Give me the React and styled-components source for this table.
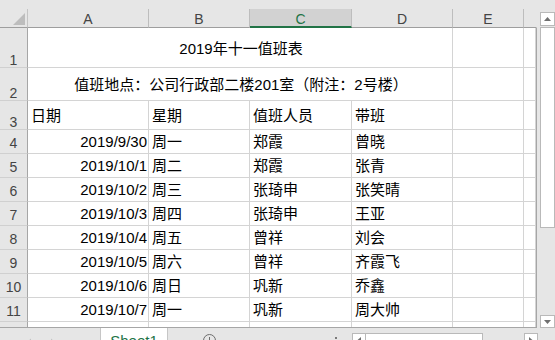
import React from "react";
import styled, { createGlobalStyle } from "styled-components";

const GlobalStyle = createGlobalStyle`
  html, body {
    margin: 0;
    padding: 0;
    background: #e6e6e6;
  }
  * {
    box-sizing: border-box;
  }
`;

// row header, A..E, then the sliver of F that fits before the frame
const BODY_COLS = "28px 121px 101px 102px 101px 71px 12px";
const HEAD_COLS = "28px 121px 101px 102px 101px 71px 13px";

const Window = styled.div`
  width: 555px;
  height: 340px;
  overflow: hidden;
  background: #e6e6e6;
  display: flex;
  flex-direction: column;
  font-family: "Liberation Sans", "Noto Sans CJK SC", sans-serif;
  color: #000;
`;

const Workspace = styled.div`
  display: flex;
  height: 328px;
  flex: none;
`;

const SheetPane = styled.div`
  width: 537px;
  padding-top: 9px;
  display: flex;
  flex-direction: column;
`;

const ColumnHeaders = styled.div`
  display: grid;
  grid-template-columns: ${HEAD_COLS};
  height: 19px;
  flex: none;
`;

const Corner = styled.div`
  position: relative;
  border-right: 1px solid #c4c4c4;
  border-bottom: 1px solid #9e9e9e;
  svg {
    position: absolute;
    right: 2px;
    bottom: 2px;
  }
`;

const ColHead = styled.div`
  display: flex;
  align-items: flex-end;
  justify-content: center;
  font-size: 14px;
  line-height: 14px;
  padding-bottom: ${(p) => (p.$active ? 0 : 1)}px;
  background: ${(p) => (p.$active ? "#d2d2d2" : "#e6e6e6")};
  color: ${(p) => (p.$active ? "#217346" : "#444")};
  border-right: 1px solid ${(p) => (p.$last ? "transparent" : "#bdbdbd")};
  border-bottom: ${(p) => (p.$active ? "2px solid #217346" : "1px solid #9e9e9e")};
`;

const Body = styled.div`
  flex: 1;
  min-height: 0;
  display: grid;
  grid-template-columns: ${BODY_COLS};
  grid-template-rows: 40px 33px 29px repeat(9, 24px);
  align-content: start;
  background: #fff;
  border-right: 1px solid #a6a6a6;
  border-bottom: 1px solid #a6a6a6;
  overflow: hidden;
`;

const RowHead = styled.div`
  display: flex;
  justify-content: center;
  align-items: ${(p) => (p.$low ? "flex-end" : "center")};
  padding-top: ${(p) => (p.$low ? 0 : 3)}px;
  background: #e6e6e6;
  color: #444;
  font-size: 14px;
  line-height: 14px;
  border-right: 1px solid #a6a6a6;
  border-bottom: 1px solid #d0d0d0;
`;

const Cell = styled.div`
  display: flex;
  align-items: center;
  justify-content: ${(p) =>
    p.$align === "right" ? "flex-end" : p.$align === "center" ? "center" : "flex-start"};
  grid-column: ${(p) => (p.$span ? `span ${p.$span}` : "auto")};
  padding: ${(p) => p.$nudge || 0}px 1px 0 3px;
  font-size: 15px;
  line-height: 18px;
  white-space: nowrap;
  overflow: hidden;
  border-right: 1px solid #d4d4d4;
  border-bottom: 1px solid #d4d4d4;
`;

const VScroll = styled.div`
  width: 15px;
  margin-left: 3px;
  padding-top: 12px;
  display: flex;
  flex-direction: column;
`;

const ScrollButton = styled.div`
  flex: none;
  width: ${(p) => p.$w || 15}px;
  height: ${(p) => p.$h || 14}px;
  background: #fff;
  border: 1px solid #b9b9b9;
  display: flex;
  align-items: center;
  justify-content: center;
`;

const VThumb = styled.div`
  flex: none;
  height: 201px;
  margin-top: 1px;
  background: #fff;
  border: 1px solid #b9b9b9;
`;

const Fill = styled.div`
  flex: 1;
`;

const TabBar = styled.div`
  display: flex;
  height: 24px;
  flex: none;
`;

const NavArea = styled.div`
  width: 100px;
  display: flex;
  align-items: flex-start;
  gap: 20px;
  padding: 10px 0 0 27px;
`;

const SheetTab = styled.div`
  width: 68px;
  background: #fff;
  border-left: 1px solid #c6c6c6;
  border-right: 1px solid #c6c6c6;
  color: #217346;
  font-size: 15px;
  line-height: 18px;
  display: flex;
  justify-content: center;
  padding-top: 4px;
`;

const TabGap = styled.div`
  width: 184px;
  display: flex;
  align-items: flex-start;
  padding: 6px 15px 0 35px;
`;

const AddSheet = styled.div`
  width: 13px;
  height: 13px;
  border: 1px solid #6e6e6e;
  border-radius: 50%;
  position: relative;
  &::before,
  &::after {
    content: "";
    position: absolute;
    background: #6e6e6e;
  }
  &::before {
    left: 5px;
    top: 2px;
    width: 1px;
    height: 7px;
  }
  &::after {
    left: 2px;
    top: 5px;
    width: 7px;
    height: 1px;
  }
`;

const Grip = styled.div`
  width: 2px;
  margin-top: 3px;
  display: flex;
  flex-direction: column;
  gap: 3px;
  span {
    width: 2px;
    height: 2px;
    background: #7a7a7a;
  }
`;

const HScroll = styled.div`
  width: 186px;
  height: 14px;
  margin-top: 5px;
  display: flex;
`;

const HThumb = styled.div`
  width: 118px;
  margin-left: -1px;
  background: #fff;
  border: 1px solid #b9b9b9;
`;

const Arrow = ({ dir, color = "#6f6f6f", size = 7 }) => {
  const pts = {
    up: "0,4 3.5,0 7,4",
    down: "0,0 7,0 3.5,4",
    left: "4,0 4,7 0,3.5",
    right: "0,0 0,7 4,3.5",
  }[dir];
  const vertical = dir === "up" || dir === "down";
  return (
    <svg
      width={vertical ? size : 4}
      height={vertical ? 4 : size}
      viewBox={vertical ? "0 0 7 4" : "0 0 4 7"}
    >
      <polygon points={pts} fill={color} />
    </svg>
  );
};

const columns = ["A", "B", "C", "D", "E", ""];

const duty = [
  ["2019/9/30", "周一", "郑霞", "曾晓"],
  ["2019/10/1", "周二", "郑霞", "张青"],
  ["2019/10/2", "周三", "张琦申", "张笑晴"],
  ["2019/10/3", "周四", "张琦申", "王亚"],
  ["2019/10/4", "周五", "曾祥", "刘会"],
  ["2019/10/5", "周六", "曾祥", "齐霞飞"],
  ["2019/10/6", "周日", "巩新", "乔鑫"],
  ["2019/10/7", "周一", "巩新", "周大帅"],
];

const BlankTail = () => (
  <>
    <Cell />
    <Cell />
  </>
);

export default function App() {
  return (
    <>
      <GlobalStyle />
      <Window>
        <Workspace>
          <SheetPane>
            <ColumnHeaders>
              <Corner>
                <svg width="12" height="12" viewBox="0 0 12 12">
                  <polygon points="12,0 12,12 0,12" fill="#bdbdbd" />
                </svg>
              </Corner>
              {columns.map((c, i) => (
                <ColHead key={i} $active={c === "C"} $last={i === columns.length - 1}>
                  {c}
                </ColHead>
              ))}
            </ColumnHeaders>

            <Body>
              <RowHead $low>1</RowHead>
              <Cell $span={4} $align="center" $nudge={3}>
                2019年十一值班表
              </Cell>
              <BlankTail />

              <RowHead $low>2</RowHead>
              <Cell $span={4} $align="center" $nudge={2}>
                值班地点：公司行政部二楼201室（附注：2号楼）
              </Cell>
              <BlankTail />

              <RowHead $low>3</RowHead>
              <Cell $nudge={1}>日期</Cell>
              <Cell $nudge={1}>星期</Cell>
              <Cell $nudge={1}>值班人员</Cell>
              <Cell $nudge={1}>带班</Cell>
              <BlankTail />

              {duty.map(([date, day, staff, lead], i) => (
                <React.Fragment key={date}>
                  <RowHead>{i + 4}</RowHead>
                  <Cell $align="right">{date}</Cell>
                  <Cell>{day}</Cell>
                  <Cell>{staff}</Cell>
                  <Cell>{lead}</Cell>
                  <BlankTail />
                </React.Fragment>
              ))}

              <RowHead>12</RowHead>
              <Cell />
              <Cell />
              <Cell />
              <Cell />
              <BlankTail />
            </Body>
          </SheetPane>

          <VScroll>
            <ScrollButton>
              <Arrow dir="up" />
            </ScrollButton>
            <VThumb />
            <Fill />
            <ScrollButton $h={13}>
              <Arrow dir="down" />
            </ScrollButton>
          </VScroll>
        </Workspace>

        <TabBar>
          <NavArea>
            <Arrow dir="left" color="#c2c2c2" size={8} />
            <Arrow dir="right" color="#c2c2c2" size={8} />
          </NavArea>
          <SheetTab>Sheet1</SheetTab>
          <TabGap>
            <AddSheet />
            <Fill />
            <Grip>
              <span />
              <span />
              <span />
            </Grip>
          </TabGap>
          <HScroll>
            <ScrollButton $w={14}>
              <Arrow dir="left" />
            </ScrollButton>
            <HThumb />
            <Fill />
            <ScrollButton $w={14}>
              <Arrow dir="right" />
            </ScrollButton>
          </HScroll>
        </TabBar>
      </Window>
    </>
  );
}
